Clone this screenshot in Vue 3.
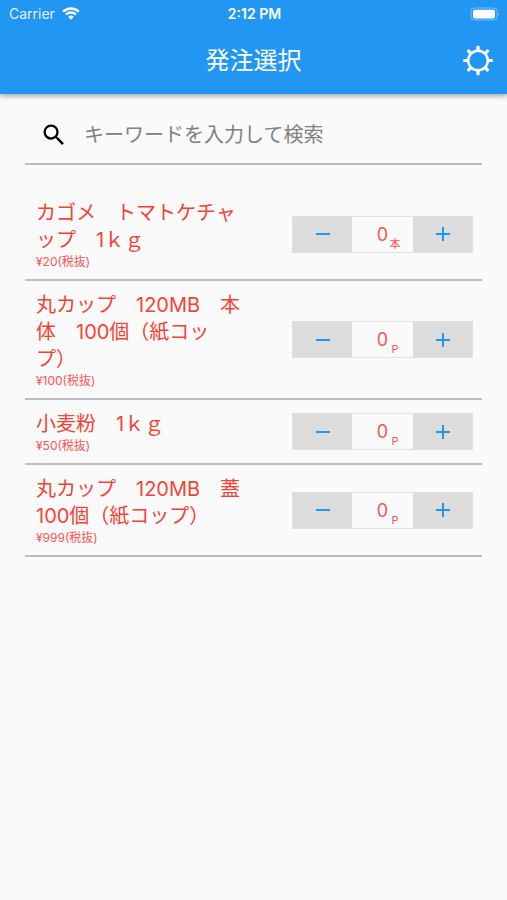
<template>
  <div class="page" lang="ja">
    <header class="header">
      <div class="status-bar">
        <div class="carrier">
          <span>Carrier</span>
          <svg class="wifi" viewBox="0 0 18 13" aria-hidden="true">
            <path d="M1.2 4.6a11.2 11.2 0 0 1 15.6 0" />
            <path d="M4 7.5a7.2 7.2 0 0 1 10 0" />
            <path class="wifi-dot" d="M9 12.8 6.2 9.9a4 4 0 0 1 5.6 0z" />
          </svg>
        </div>
        <span class="time">2:12 PM</span>
        <svg class="battery" viewBox="0 0 30 14" aria-hidden="true">
          <rect class="battery-case" x="1" y="1" width="26" height="12" rx="3.5" />
          <rect x="3" y="2.8" width="22" height="8.6" rx="1.8" />
          <path class="battery-tip" d="M28.2 5q1.6 2 0 4z" />
        </svg>
      </div>
      <div class="app-bar">
        <h1>発注選択</h1>
        <button type="button" class="settings" aria-label="設定">
          <svg viewBox="0 0 32 32" aria-hidden="true">
            <circle cx="16" cy="15.5" r="9.8" />
            <path
              v-for="angle in teeth"
              :key="angle"
              d="M13.2 6.2 14.4 4.2V1.6Q14.4.7 15.3.7H16.7Q17.6.7 17.6 1.6V4.2L18.8 6.2Z"
              :transform="`rotate(${angle} 16 15.5)`"
            />
          </svg>
        </button>
      </div>
    </header>

    <main class="content">
      <label class="search">
        <svg viewBox="0 0 24 24" aria-hidden="true">
          <path
            d="M15.5 14h-.79l-.28-.27A6.471 6.471 0 0 0 16 9.5 6.5 6.5 0 1 0 9.5 16c1.61 0 3.09-.59 4.23-1.57l.27.28v.79l5 4.99L20.49 19l-4.99-5zm-6 0C7.01 14 5 11.99 5 9.5S7.01 5 9.5 5 14 7.01 14 9.5 11.99 14 9.5 14z"
          />
        </svg>
        <input v-model="keyword" type="text" placeholder="キーワードを入力して検索" aria-label="キーワード" />
      </label>

      <ul class="items">
        <li v-for="item in filteredItems" :key="item.id" class="item">
          <div class="info">
            <p class="name">{{ item.name }}</p>
            <p class="price">¥{{ item.price }}(税抜)</p>
          </div>
          <div class="stepper">
            <button type="button" aria-label="減らす" @click="decrease(item)">
              <svg viewBox="0 0 14 14" aria-hidden="true"><path d="M0 7h14" /></svg>
            </button>
            <label class="quantity">
              <input v-model.number="item.quantity" type="text" inputmode="numeric" aria-label="数量" />
              <span class="unit">{{ item.unit }}</span>
            </label>
            <button type="button" aria-label="増やす" @click="item.quantity++">
              <svg viewBox="0 0 14 14" aria-hidden="true"><path d="M0 7h14M7 0v14" /></svg>
            </button>
          </div>
        </li>
      </ul>
    </main>
  </div>
</template>

<script setup>
import { ref, computed } from 'vue';

const teeth = [0, 45, 90, 135, 180, 225, 270, 315];

const keyword = ref('');

const items = ref([
  { id: 1, name: 'カゴメ　トマトケチャップ　1ｋｇ', price: 20, unit: '本', quantity: 0 },
  { id: 2, name: '丸カップ　120MB　本体　100個（紙コップ）', price: 100, unit: 'P', quantity: 0 },
  { id: 3, name: '小麦粉　1ｋｇ', price: 50, unit: 'P', quantity: 0 },
  { id: 4, name: '丸カップ　120MB　蓋 100個（紙コップ）', price: 999, unit: 'P', quantity: 0 }
]);

const filteredItems = computed(() => items.value.filter((item) => item.name.includes(keyword.value)));

const decrease = (item) => {
  if (item.quantity > 0) item.quantity--;
};
</script>

<style>
body {
  background: #fafafa;
}
</style>

<style scoped>
.page {
  min-height: 100vh;
  background: #fafafa;
  font-family: Inter, 'Noto Sans CJK JP', sans-serif;
}
.page * {
  box-sizing: border-box;
}
button, input {
  font-family: inherit;
  padding: 0;
  border: none;
  background: none;
}
.header {
  background: #2196f3;
  color: #fff;
  box-shadow: 0 2px 5px rgba(0, 0, 0, .35);
}
.status-bar {
  display: grid;
  grid-template-columns: 1fr auto 1fr;
  align-items: center;
  height: 27px;
  padding: 0 7px 0 9px;
  font-size: 14px;
}
.carrier {
  display: flex;
  align-items: center;
  gap: 7px;
  color: rgba(255, 255, 255, .9);
}
.wifi {
  width: 18px;
  height: 13px;
  fill: none;
  stroke: #fff;
  stroke-width: 2.4;
}
.wifi-dot {
  fill: #fff;
  stroke: none;
}
.time {
  font-weight: 600;
}
.battery {
  justify-self: end;
  width: 30px;
  height: 14px;
  fill: #fff;
}
.battery-case {
  fill: none;
  stroke: rgba(255, 255, 255, .4);
}
.battery-tip {
  fill: rgba(255, 255, 255, .5);
}
.app-bar {
  display: grid;
  grid-template-columns: 1fr auto 1fr;
  align-items: center;
  height: 67px;
  padding: 0 13px;
}
.app-bar h1 {
  grid-column: 2;
  margin: 0;
  font-size: 24px;
  line-height: 32px;
  font-weight: 400;
}
.settings {
  justify-self: end;
  width: 32px;
  height: 32px;
  cursor: pointer;
}
.settings svg {
  display: block;
  fill: #fff;
}
.settings circle {
  fill: none;
  stroke: #fff;
  stroke-width: 2.4;
}
.content {
  padding: 12px 25px;
}
.search {
  display: flex;
  align-items: center;
  gap: 16px;
  height: 59px;
  padding: 0 15px;
  border-bottom: 2px solid #bdbdbd;
}
.search svg {
  flex: none;
  width: 28px;
  height: 28px;
}
.search input {
  flex: 1;
  min-width: 0;
  font-size: 20px;
  line-height: 28px;
  outline: none;
}
.search input::placeholder {
  color: #808080;
  opacity: 1;
}
.items {
  margin: 24px 0 0;
  padding: 0;
  list-style: none;
}
.item {
  display: flex;
  align-items: center;
  justify-content: space-between;
  padding: 10px 9px 10px 11px;
  border-bottom: 2px solid #bdbdbd;
  color: #f44336;
}
.info {
  width: 208px;
  padding-top: 1px;
}
.name, .price {
  margin: 0;
}
.name {
  font-size: 20px;
  line-height: 27px;
  text-spacing-trim: space-all;
}
.price {
  font-size: 12px;
  line-height: 15px;
  color: #ff5252;
}
.stepper {
  display: flex;
  flex: none;
  border: 1px solid #e0e0e0;
}
.stepper button {
  display: flex;
  align-items: center;
  justify-content: center;
  width: 59px;
  height: 35px;
  background: #dcdcdc;
  cursor: pointer;
}
.stepper svg {
  width: 14px;
  height: 14px;
  stroke: #2196f3;
  stroke-width: 2;
}
.quantity {
  position: relative;
  width: 61px;
}
.quantity input {
  width: 100%;
  height: 100%;
  color: #ff5252;
  font-size: 18px;
  text-align: center;
}
.unit {
  position: absolute;
  left: 37px;
  bottom: 0;
  width: 12px;
  font-size: 11px;
  line-height: 16px;
  text-align: center;
  color: #ff5252;
}
</style>
